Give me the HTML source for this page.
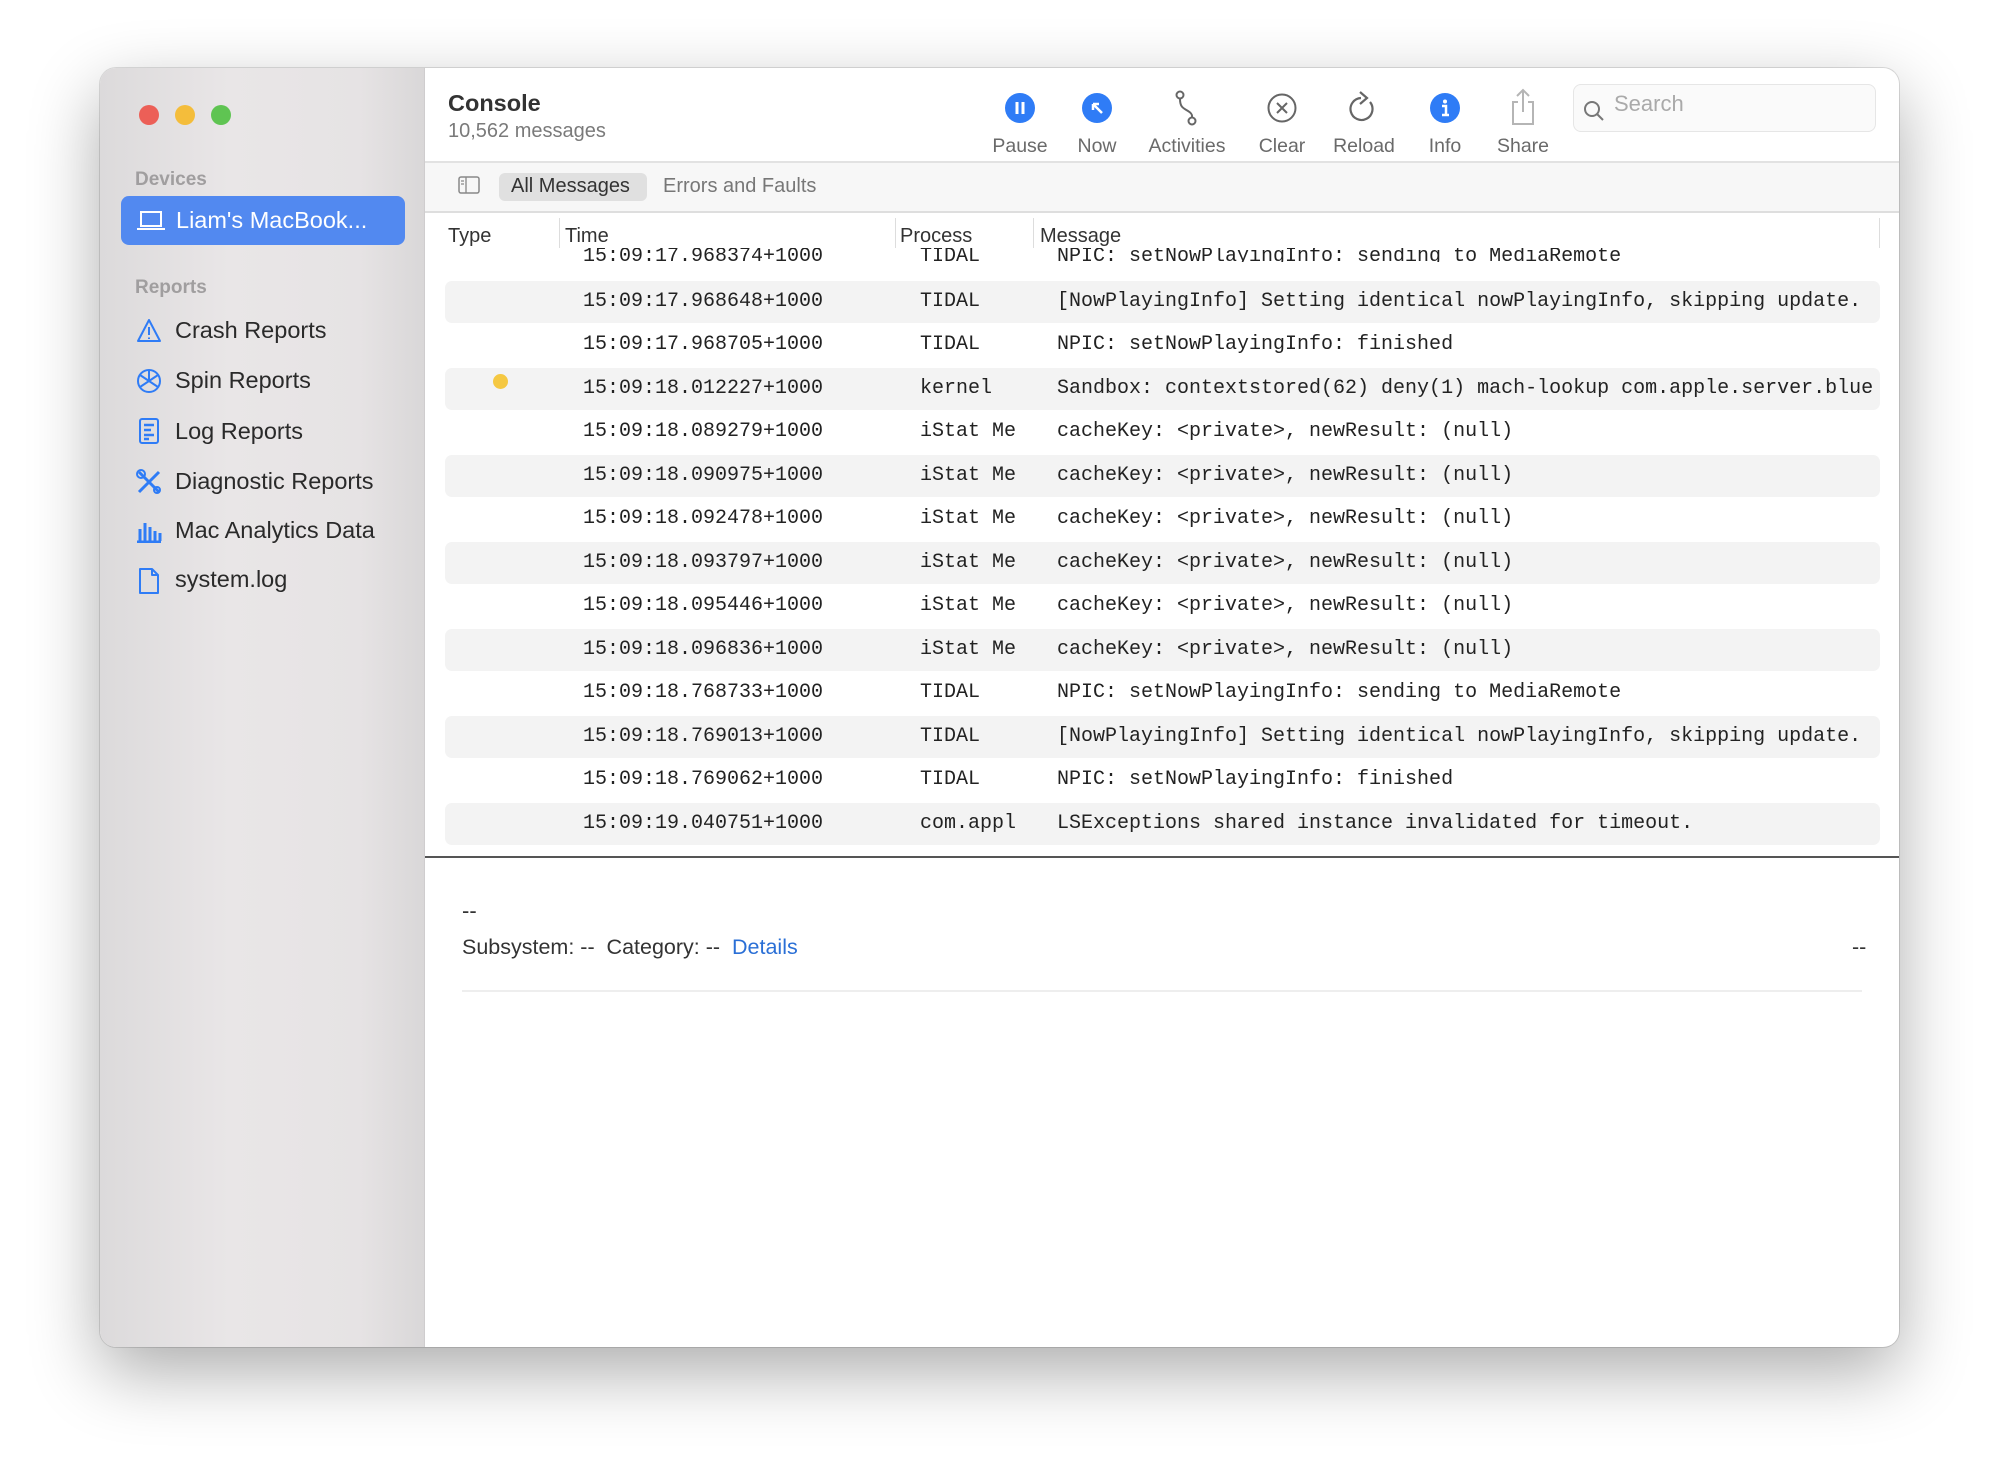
<!DOCTYPE html>
<html><head><meta charset="utf-8"><style>
*{margin:0;padding:0;box-sizing:border-box}
body{width:2000px;height:1481px;background:#fff;position:relative;overflow:hidden;font-family:"Liberation Sans",sans-serif;color:#222}
.win{position:absolute;left:100px;top:68px;width:1799px;height:1279px;border-radius:16px;background:#fff;box-shadow:0 25px 70px rgba(0,0,0,.33),0 0 0 1px rgba(0,0,0,.12);overflow:hidden}
.side{position:absolute;left:0;top:0;width:325px;height:100%;background:linear-gradient(90deg,#dcdadb,#e9e6e7 40%,#e6e3e4 80%,#d9d7d8);border-right:1px solid #cfcdce}
.a{position:absolute;white-space:nowrap}
.tl{position:absolute;top:37px;width:20px;height:20px;border-radius:50%}
.sh{font-size:19px;color:#a09e9f;font-weight:bold}
.si{font-size:23.5px;color:#2a2a2a}
.mono{font-family:"Liberation Mono",monospace;font-size:20px;color:#222}
.row{position:absolute;left:345px;width:1435px;height:42px;border-radius:7px}
.row.s{background:#f3f3f3}
.tb{font-size:19.5px;color:#6a6a6a;text-align:center;width:120px}
.ic{position:absolute;top:92px;width:30px;height:30px}
.r{position:absolute;left:0;top:3px;width:1799px;height:600px}
</style></head><body>
<div class="win">
 <div class="side">
  <div class="tl" style="left:39px;background:#ec5f57"></div>
  <div class="tl" style="left:75px;background:#f4bd3b"></div>
  <div class="tl" style="left:111px;background:#5fc452"></div>
  <div class="a sh" style="left:35px;top:101px">Devices</div>
  <div class="a" style="left:21px;top:128px;width:284px;height:49px;background:#5289f0;border-radius:8px"></div>
  <svg class="a" style="left:36px;top:142px" width="30" height="22" viewBox="0 0 30 22"><rect x="5" y="2" width="20" height="14" fill="none" stroke="#fff" stroke-width="2"/><path d="M1 19h28" stroke="#fff" stroke-width="2"/></svg>
  <div class="a" style="left:76px;top:139px;font-size:23.5px;color:#fff">Liam's MacBook...</div>
  <div class="a sh" style="left:35px;top:209px">Reports</div>
  <svg class="a" style="left:36px;top:250px" width="26" height="26" viewBox="0 0 26 26"><path d="M13 2L24 23H2Z" fill="none" stroke="#2f7cf6" stroke-width="2" stroke-linejoin="round"/><path d="M13 9v8M13 19.5v1.5" stroke="#2f7cf6" stroke-width="2"/></svg>
  <div class="a si" style="left:75px;top:249px">Crash Reports</div>
  <svg class="a" style="left:36px;top:300px" width="26" height="26" viewBox="0 0 26 26"><circle cx="13" cy="13" r="11" fill="none" stroke="#2f7cf6" stroke-width="2"/><path d="M13 2v11M13 13l9 6M13 13l-9 6M4 7l9 6M22 7l-9 6" stroke="#2f7cf6" stroke-width="2"/></svg>
  <div class="a si" style="left:75px;top:299px">Spin Reports</div>
  <svg class="a" style="left:38px;top:350px" width="22" height="26" viewBox="0 0 22 26"><rect x="2" y="1" width="18" height="24" rx="2" fill="none" stroke="#2f7cf6" stroke-width="2"/><path d="M6 7h10M6 12h7M6 17h10M6 21h5" stroke="#2f7cf6" stroke-width="2.5"/></svg>
  <div class="a si" style="left:75px;top:350px">Log Reports</div>
  <svg class="a" style="left:35px;top:400px" width="28" height="28" viewBox="0 0 28 28"><path d="M4 4l20 20M24 4L4 24" stroke="#2f7cf6" stroke-width="3"/><circle cx="6" cy="6" r="4" fill="none" stroke="#2f7cf6" stroke-width="2"/><circle cx="22" cy="22" r="3" fill="none" stroke="#2f7cf6" stroke-width="2"/></svg>
  <div class="a si" style="left:75px;top:400px">Diagnostic Reports</div>
  <svg class="a" style="left:36px;top:451px" width="26" height="24" viewBox="0 0 26 24"><path d="M4 22V10M9 22V4M14 22V8M19 22V12M24 22V14M1 23h24" stroke="#2f7cf6" stroke-width="3"/></svg>
  <div class="a si" style="left:75px;top:449px">Mac Analytics Data</div>
  <svg class="a" style="left:38px;top:500px" width="22" height="26" viewBox="0 0 22 26"><path d="M2 1h12l6 6v18H2Z M14 1v6h6" fill="none" stroke="#2f7cf6" stroke-width="2" stroke-linejoin="round"/></svg>
  <div class="a si" style="left:75px;top:498px">system.log</div>
 </div>
 <div class="a" style="left:348px;top:22px;font-size:23.5px;font-weight:bold;color:#333">Console</div>
 <div class="a" style="left:348px;top:52px;font-size:20px;color:#7a7a7a">10,562 messages</div>
 <svg class="ic" style="left:905px;top:25px" viewBox="0 0 30 30"><circle cx="15" cy="15" r="15" fill="#2f7cf6"/><path d="M12 9v12M18 9v12" stroke="#fff" stroke-width="3"/></svg>
 <svg class="ic" style="left:982px;top:25px" viewBox="0 0 30 30"><circle cx="15" cy="15" r="15" fill="#2f7cf6"/><path d="M11 11l9 9M11 11h6M11 11v6" stroke="#fff" stroke-width="2.5" fill="none"/></svg>
 <svg class="ic" style="left:1072px;top:22px;width:30px;height:36px" viewBox="0 0 30 36"><circle cx="8" cy="5" r="3.5" fill="none" stroke="#666" stroke-width="2"/><circle cx="20" cy="31" r="3.5" fill="none" stroke="#666" stroke-width="2"/><path d="M8 9c0 8 3 9 8 12s4 5 4 6" fill="none" stroke="#666" stroke-width="2"/></svg>
 <svg class="ic" style="left:1167px;top:25px" viewBox="0 0 30 30"><circle cx="15" cy="15" r="13.5" fill="none" stroke="#666" stroke-width="2"/><path d="M10 10l10 10M20 10L10 20" stroke="#666" stroke-width="2"/></svg>
 <svg class="ic" style="left:1249px;top:21px;height:36px" viewBox="0 0 30 36"><path d="M21 13A11 11 0 1 1 12 9" fill="none" stroke="#666" stroke-width="2.2"/><path d="M11 3l7 6-7 6" fill="none" stroke="#666" stroke-width="2.2"/></svg>
 <svg class="ic" style="left:1330px;top:25px" viewBox="0 0 30 30"><circle cx="15" cy="15" r="15" fill="#2f7cf6"/><circle cx="15" cy="8.5" r="2" fill="#fff"/><path d="M12 13h4v9M12 22h7" stroke="#fff" stroke-width="2.5" fill="none"/></svg>
 <svg class="ic" style="left:1408px;top:20px;height:38px" viewBox="0 0 30 38"><path d="M10 14H5v22h20V14h-5M15 2v22M9 8l6-6 6 6" fill="none" stroke="#b5b5b5" stroke-width="2"/></svg>
 <div class="a tb" style="left:860px;top:67px">Pause</div>
 <div class="a tb" style="left:937px;top:67px">Now</div>
 <div class="a tb" style="left:1027px;top:67px">Activities</div>
 <div class="a tb" style="left:1122px;top:67px">Clear</div>
 <div class="a tb" style="left:1204px;top:67px">Reload</div>
 <div class="a tb" style="left:1285px;top:67px">Info</div>
 <div class="a tb" style="left:1363px;top:67px">Share</div>
 <div class="a" style="left:1473px;top:16px;width:303px;height:48px;border:1px solid #e6e6e6;border-radius:8px;background:#fafafa"></div>
 <svg class="a" style="left:1482px;top:31px" width="24" height="24" viewBox="0 0 24 24"><circle cx="10" cy="10" r="7" fill="none" stroke="#777" stroke-width="2"/><path d="M15 15l6 6" stroke="#777" stroke-width="2"/></svg>
 <div class="a" style="left:1514px;top:23px;font-size:22px;color:#aaa">Search</div>
 <div class="a" style="left:325px;top:93px;width:1474px;height:2px;background:#e2e2e2"></div>
 <div class="a" style="left:325px;top:95px;width:1474px;height:49px;background:#f7f7f7"></div>
 <svg class="a" style="left:358px;top:108px" width="22" height="18" viewBox="0 0 22 18"><rect x="1" y="1" width="20" height="16" rx="2" fill="none" stroke="#888" stroke-width="1.5"/><path d="M8 1v16M3 5h3M3 8h3" stroke="#888" stroke-width="1.3"/></svg>
 <div class="a" style="left:399px;top:105px;width:148px;height:28px;background:#e0e0e0;border-radius:6px"></div>
 <div class="a" style="left:411px;top:107px;font-size:20px;color:#333">All Messages</div>
 <div class="a" style="left:563px;top:107px;font-size:20px;color:#777">Errors and Faults</div>
 <div class="a" style="left:325px;top:143px;width:1474px;height:2px;background:#dedede"></div>
 <div class="a" style="left:325px;top:145px;width:1474px;height:35px;background:rgba(255,255,255,.94)"></div>
 <div class="a" style="left:348px;top:157px;font-size:20px;color:#333">Type</div>
 <div class="a" style="left:465px;top:157px;font-size:20px;color:#333">Time</div>
 <div class="a" style="left:800px;top:157px;font-size:20px;color:#333">Process</div>
 <div class="a" style="left:940px;top:157px;font-size:20px;color:#333">Message</div>
 <div class="a" style="left:459px;top:150px;width:1px;height:30px;background:#ddd"></div>
 <div class="a" style="left:795px;top:150px;width:1px;height:30px;background:#ddd"></div>
 <div class="a" style="left:933px;top:150px;width:1px;height:30px;background:#ddd"></div>
 <div class="a" style="left:1779px;top:150px;width:1px;height:30px;background:#ddd"></div>
 <div class="a" style="left:0;top:180px;width:1799px;height:14px;overflow:hidden">
  <div style="position:absolute;left:0;top:-180px;width:1799px;height:300px">
   <div class="a mono" style="left:483px;top:177px">15:09:17.968374+1000</div>
   <div class="a mono" style="left:820px;top:177px">TIDAL</div>
   <div class="a mono" style="left:957px;top:177px">NPIC: setNowPlayingInfo: sending to MediaRemote</div>
  </div>
 </div>
 <div class="r">
  <div class="row s" style="top:210px"></div>
  <div class="a mono" style="left:483px;top:219px">15:09:17.968648+1000</div><div class="a mono" style="left:820px;top:219px">TIDAL</div><div class="a mono" style="left:957px;top:219px;width:820px;overflow:hidden">[NowPlayingInfo] Setting identical nowPlayingInfo, skipping update.</div>
  <div class="a mono" style="left:483px;top:262px">15:09:17.968705+1000</div><div class="a mono" style="left:820px;top:262px">TIDAL</div><div class="a mono" style="left:957px;top:262px">NPIC: setNowPlayingInfo: finished</div>
  <div class="row s" style="top:297px"></div>
  <div class="a" style="left:393px;top:303px;width:15px;height:15px;border-radius:50%;background:#f5c842"></div>
  <div class="a mono" style="left:483px;top:306px">15:09:18.012227+1000</div><div class="a mono" style="left:820px;top:306px">kernel</div><div class="a mono" style="left:957px;top:306px;width:817px;overflow:hidden">Sandbox: contextstored(62) deny(1) mach-lookup com.apple.server.bluetooth</div>
  <div class="a mono" style="left:483px;top:349px">15:09:18.089279+1000</div><div class="a mono" style="left:820px;top:349px">iStat Me</div><div class="a mono" style="left:957px;top:349px">cacheKey: &lt;private&gt;, newResult: (null)</div>
  <div class="row s" style="top:384px"></div>
  <div class="a mono" style="left:483px;top:393px">15:09:18.090975+1000</div><div class="a mono" style="left:820px;top:393px">iStat Me</div><div class="a mono" style="left:957px;top:393px">cacheKey: &lt;private&gt;, newResult: (null)</div>
  <div class="a mono" style="left:483px;top:436px">15:09:18.092478+1000</div><div class="a mono" style="left:820px;top:436px">iStat Me</div><div class="a mono" style="left:957px;top:436px">cacheKey: &lt;private&gt;, newResult: (null)</div>
  <div class="row s" style="top:471px"></div>
  <div class="a mono" style="left:483px;top:480px">15:09:18.093797+1000</div><div class="a mono" style="left:820px;top:480px">iStat Me</div><div class="a mono" style="left:957px;top:480px">cacheKey: &lt;private&gt;, newResult: (null)</div>
  <div class="a mono" style="left:483px;top:523px">15:09:18.095446+1000</div><div class="a mono" style="left:820px;top:523px">iStat Me</div><div class="a mono" style="left:957px;top:523px">cacheKey: &lt;private&gt;, newResult: (null)</div>
  <div class="row s" style="top:558px"></div>
  <div class="a mono" style="left:483px;top:567px">15:09:18.096836+1000</div><div class="a mono" style="left:820px;top:567px">iStat Me</div><div class="a mono" style="left:957px;top:567px">cacheKey: &lt;private&gt;, newResult: (null)</div>
 </div>
 <div class="r" style="top:3px;height:800px">
  <div class="a mono" style="left:483px;top:610px">15:09:18.768733+1000</div><div class="a mono" style="left:820px;top:610px">TIDAL</div><div class="a mono" style="left:957px;top:610px">NPIC: setNowPlayingInfo: sending to MediaRemote</div>
  <div class="row s" style="top:645px"></div>
  <div class="a mono" style="left:483px;top:654px">15:09:18.769013+1000</div><div class="a mono" style="left:820px;top:654px">TIDAL</div><div class="a mono" style="left:957px;top:654px;width:820px;overflow:hidden">[NowPlayingInfo] Setting identical nowPlayingInfo, skipping update.</div>
  <div class="a mono" style="left:483px;top:697px">15:09:18.769062+1000</div><div class="a mono" style="left:820px;top:697px">TIDAL</div><div class="a mono" style="left:957px;top:697px">NPIC: setNowPlayingInfo: finished</div>
  <div class="row s" style="top:732px"></div>
  <div class="a mono" style="left:483px;top:741px">15:09:19.040751+1000</div><div class="a mono" style="left:820px;top:741px">com.appl</div><div class="a mono" style="left:957px;top:741px">LSExceptions shared instance invalidated for timeout.</div>
 </div>
 <div class="a" style="left:325px;top:788px;width:1474px;height:2px;background:#555"></div>
 <div class="a" style="left:362px;top:830px;font-size:22px;color:#333">--</div>
 <div class="a" style="left:362px;top:867px;font-size:21.5px;color:#333">Subsystem: --&nbsp;&nbsp;Category: --&nbsp;&nbsp;<span style="color:#2a6fd6">Details</span></div>
 <div class="a" style="left:1752px;top:867px;font-size:21.5px;color:#333">--</div>
 <div class="a" style="left:362px;top:922px;width:1400px;height:2px;background:#eee"></div>
</div>
</body></html>
